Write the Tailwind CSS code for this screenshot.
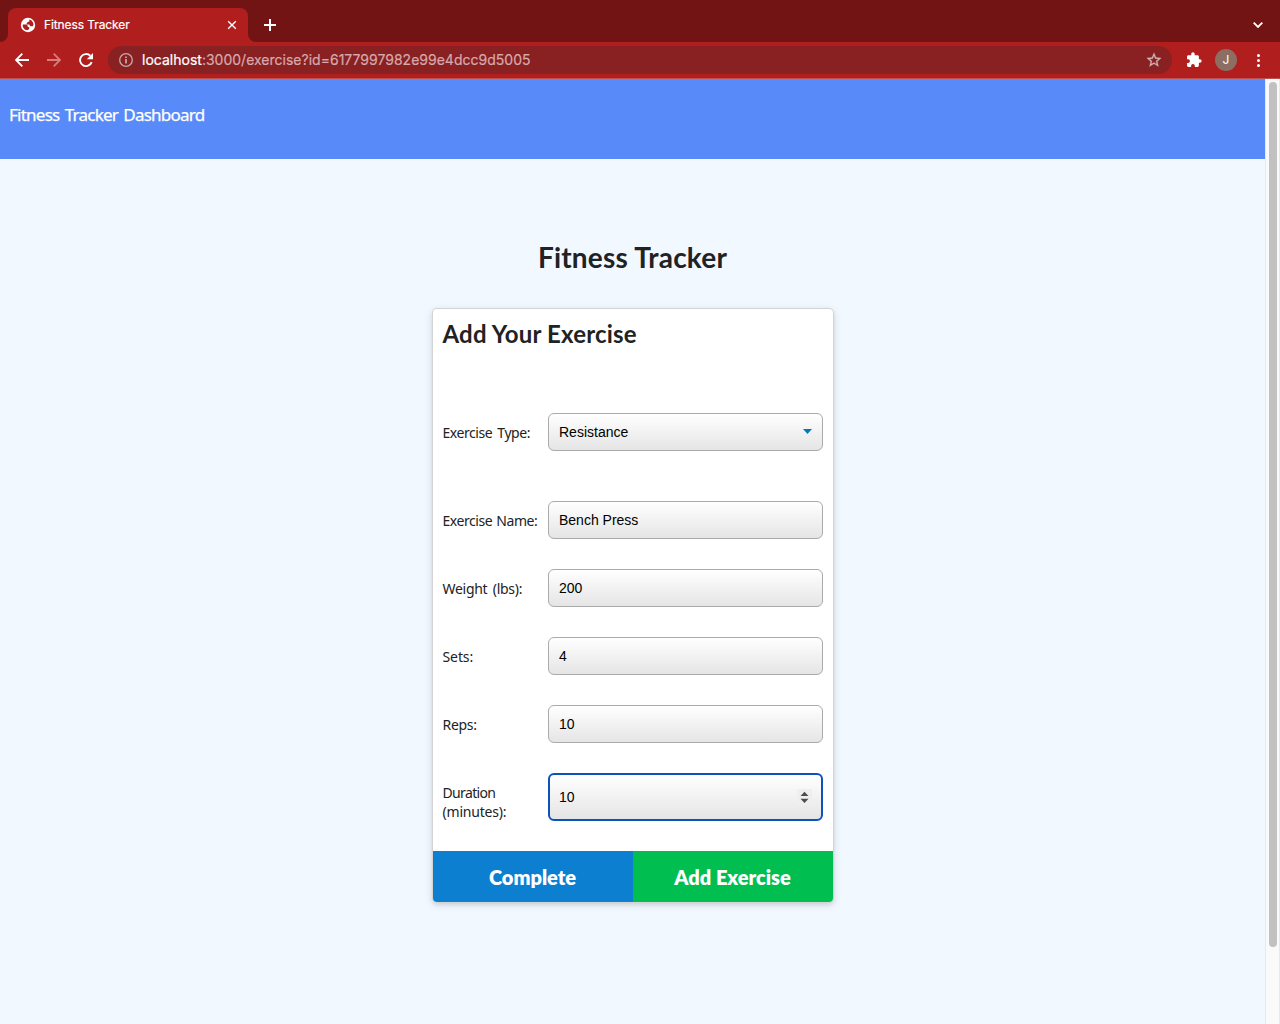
<!DOCTYPE html>
<html lang="en">
<head>
<meta charset="utf-8">
<title>Fitness Tracker</title>
<script src="https://cdn.jsdelivr.net/npm/@tailwindcss/browser@4"></script>
</head>
<body class="w-[1280px] h-[1024px] overflow-hidden flex flex-col bg-[#f1f8ff] font-['Inter',sans-serif]">
  <!-- Tab strip -->
  <div class="h-[42px] shrink-0 bg-[#721414] flex items-end">
    <svg class="w-2 h-2" viewBox="0 0 8 8"><path d="M8 0v8H0a8 8 0 0 0 8-8z" fill="#b01e1e"/></svg>
    <div class="w-60 h-[34px] rounded-t-lg bg-[#b01e1e] flex items-center pl-3 pr-[11px]">
      <svg class="w-4 h-4" viewBox="0 0 16 16"><circle cx="8" cy="8" r="7.200" fill="#fff"/><path d="M2.700 7.600H6.200Q7.700 7.700 7.700 9V10H9.200V11.700L7.800 13.300Q4.500 13.200 3.300 10.700Q2.500 9.300 2.700 7.600zM9.300 2.500Q12.700 3.200 13.500 7.200Q13.400 8.700 12.700 9.200H10.400L9.200 7.500H6.700V6.200L8 4.800H9.300z" fill="#b01e1e"/></svg>
      <span class="ml-2 flex-1 text-[12px] leading-4 text-white tracking-[-0.1px] [-webkit-text-stroke:0.2px_white] whitespace-nowrap">Fitness Tracker</span>
      <svg class="w-[10px] h-[10px]" viewBox="0 0 10 10" stroke="#fff" stroke-width="1.400"><path d="M1.200 1.200l7.600 7.600M8.800 1.200 1.200 8.800"/></svg>
    </div>
    <svg class="w-2 h-2" viewBox="0 0 8 8"><path d="M0 0v8h8a8 8 0 0 1-8-8z" fill="#b01e1e"/></svg>
    <svg class="w-3 h-3 ml-2 mb-[11px]" viewBox="0 0 12 12" stroke="#fff" stroke-width="2"><path d="M6 0v12M0 6h12"/></svg>
    <svg class="w-[10px] h-[6px] ml-auto mr-[17px] mb-[14px]" viewBox="0 0 10 6" fill="none" stroke="#fff" stroke-width="1.800"><path d="M.7.700 5 5 9.300.700"/></svg>
  </div>
  <!-- Toolbar -->
  <div class="h-[37px] shrink-0 bg-[#b01e1e] border-b border-[#c05050] flex items-center pl-[15px] pr-[14px]">
    <svg class="w-[14px] h-[14px]" viewBox="0 0 14 14" fill="none" stroke="#fff" stroke-width="1.900"><path d="M14 7H1.500M7.300.700 1 7l6.300 6.300"/></svg>
    <svg class="w-[14px] h-[14px] ml-[18px]" viewBox="0 0 14 14" fill="none" stroke="#d87c7c" stroke-width="1.800"><path d="M0 7h12.500M6.700.700 13 7l-6.300 6.300"/></svg>
    <svg class="w-[14px] h-[14px] ml-[18px]" viewBox="0 0 14 14"><path d="M12.700 9.200A6 6 0 1 1 11.300 2.800" fill="none" stroke="#fff" stroke-width="1.900"/><path d="M14 0v6.200H7.800z" fill="#fff"/></svg>
    <div class="ml-[15px] w-[1064px] h-7 rounded-full bg-[#892022] flex items-center pl-[11px] pr-[10px]">
      <svg class="w-[14px] h-[14px]" viewBox="0 0 14 14"><circle cx="7" cy="7" r="6.300" fill="none" stroke="#c5aaaa" stroke-width="1.300"/><path d="M7 6v4.400M7 3.400v1.600" stroke="#d2bcbc" stroke-width="1.500"/></svg>
      <span class="ml-[9px] flex-1 text-[14px] leading-5 text-[#d8a9aa] tracking-[0.008px] [-webkit-text-stroke:0.2px_currentColor] whitespace-nowrap"><span class="text-white">localhost</span>:3000/exercise?id=6177997982e99e4dcc9d5005</span>
      <svg class="w-4 h-4 overflow-visible" viewBox="1 1 22 22" fill="#cdb3b3" stroke="#cdb3b3" stroke-width=".4"><path d="m22 9.240-7.190-.62L12 2 9.190 8.630 2 9.240l5.460 4.730L5.820 21 12 17.270 18.180 21l-1.630-7.030L22 9.240zM12 15.400l-3.760 2.270 1-4.280-3.320-2.880 4.380-.38L12 6.100l1.710 4.040 4.380.38-3.320 2.880 1 4.280L12 15.400z"/></svg>
    </div>
    <svg class="w-4 h-4 ml-[14px]" viewBox="0.500 0.500 23 23" fill="#fff"><path d="M20.500 11H19V7c0-1.100-.9-2-2-2h-4V3.500a2.500 2.500 0 0 0-5 0V5H4c-1.100 0-1.990.9-1.990 2v3.800H3.500c1.490 0 2.700 1.210 2.700 2.700s-1.210 2.700-2.700 2.700H2V20c0 1.100.9 2 2 2h3.800v-1.500c0-1.490 1.210-2.700 2.700-2.700s2.700 1.210 2.700 2.700V22H17c1.100 0 2-.9 2-2v-4h1.500a2.500 2.500 0 0 0 0-5z"/></svg>
    <div class="ml-[13px] w-[22px] h-[22px] rounded-full bg-[#8d6e63] text-white text-[12px] leading-[22px] text-center">J</div>
    <svg class="w-[5px] h-[15px] ml-auto mr-[5px]" viewBox="0 0 5 15" fill="#fff"><circle cx="2.500" cy="2.500" r="1.500"/><circle cx="2.500" cy="7.500" r="1.500"/><circle cx="2.500" cy="12.500" r="1.500"/></svg>
  </div>
  <!-- Page -->
  <div class="flex flex-1 min-h-0">
    <main class="w-[1265px] flex flex-col items-center">
      <nav class="w-full h-20 bg-[#588bf9] pl-[9px] pt-6 text-white text-[17px] leading-6 font-['Noto_Sans',sans-serif]"><span class="tracking-[-0.750px] [word-spacing:1.500px] [-webkit-text-stroke:0.250px_white]">Fitness Tracker Dashboard</span></nav>
      <h1 class="mt-[80px] text-[28px] leading-9 font-bold tracking-[0.200px] text-[#212223] font-['Lato',sans-serif]">Fitness Tracker</h1>
      <form class="mt-[34px] ml-[1px] w-[400px] h-[593px] flex flex-col rounded-[4px] bg-white overflow-hidden shadow-[0_0_0_1px_#d4d4d5,0_2px_4px_0_rgba(34,36,38,0.12),0_2px_10px_0_rgba(34,36,38,0.15)] text-[#212223]">
        <h2 class="pl-[9.500px] pt-[9px] h-[104px] text-[24px] leading-8 font-bold tracking-[0.180px] font-['Lato',sans-serif]">Add Your Exercise</h2>
        <div class="px-[10px] flex flex-col gap-[30px] text-[14px] font-['Noto_Sans',sans-serif]">
          <div class="flex mb-5">
            <label class="w-[105.500px] -ml-[0.500px] pt-[10px] leading-[19px] tracking-[-0.450px] [word-spacing:2px] whitespace-nowrap">Exercise Type:</label>
            <div class="w-[275px] h-[38px] rounded-[6px] border border-[#aaa] bg-linear-to-b from-white to-[#e5e5e5] pl-[10px] pr-[10px] flex items-center justify-between text-black font-['Liberation_Sans',sans-serif]">Resistance<svg class="w-[9px] h-[5px] mb-px" viewBox="0 0 9 5"><path d="M0 0h9L4.500 5z" fill="#007cb2"/></svg></div>
          </div>
          <div class="flex">
            <label class="w-[105.500px] -ml-[0.500px] pt-[10px] leading-[19px] tracking-[-0.450px] [word-spacing:1px] whitespace-nowrap">Exercise Name:</label>
            <div class="w-[275px] h-[38px] rounded-[6px] border border-[#aaa] bg-linear-to-b from-white to-[#e5e5e5] pl-[10px] flex items-center text-black font-['Liberation_Sans',sans-serif]">Bench Press</div>
          </div>
          <div class="flex">
            <label class="w-[105.500px] -ml-[0.500px] pt-[10px] leading-[19px] tracking-[-0.280px] [word-spacing:2px] whitespace-nowrap">Weight (lbs):</label>
            <div class="w-[275px] h-[38px] rounded-[6px] border border-[#aaa] bg-linear-to-b from-white to-[#e5e5e5] pl-[10px] flex items-center text-black font-['Liberation_Sans',sans-serif]">200</div>
          </div>
          <div class="flex">
            <label class="w-[105.500px] -ml-[0.500px] pt-[10px] leading-[19px] tracking-[-0.100px] whitespace-nowrap">Sets:</label>
            <div class="w-[275px] h-[38px] rounded-[6px] border border-[#aaa] bg-linear-to-b from-white to-[#e5e5e5] pl-[10px] flex items-center text-black font-['Liberation_Sans',sans-serif]">4</div>
          </div>
          <div class="flex">
            <label class="w-[105.500px] -ml-[0.500px] pt-[10px] leading-[19px] tracking-[-0.300px] whitespace-nowrap">Reps:</label>
            <div class="w-[275px] h-[38px] rounded-[6px] border border-[#aaa] bg-linear-to-b from-white to-[#e5e5e5] pl-[10px] flex items-center text-black font-['Liberation_Sans',sans-serif]">10</div>
          </div>
          <div class="flex">
            <label class="w-[105.500px] -ml-[0.500px] pt-[10px] leading-[19px]"><span class="tracking-[-0.650px]">Duration</span><br><span class="tracking-[-0.200px]">(minutes):</span></label>
            <div class="w-[275px] h-[48px] rounded-[6px] border-2 border-[#0a52be] bg-linear-to-b from-white to-[#e5e5e5] pl-[9px] pr-[9px] flex items-center justify-between text-black font-['Liberation_Sans',sans-serif]">10<svg class="w-[15px] h-4" viewBox="0 0 15 16"><path d="M0 0h15v16H0z" fill="#efefef"/><path d="M7.500 2.700l4 4.300h-8zM7.500 14.100l4-4.300h-8z" fill="#4d4d4d"/></svg></div>
          </div>
        </div>
        <div class="mt-auto h-[51px] flex text-white text-[20px] leading-[52px] text-center font-extrabold font-['Lato',sans-serif]">
          <div class="w-[200px] pr-px bg-[#0c7fd0]">Complete</div>
          <div class="w-[200px] pr-px bg-[#00be4f]">Add Exercise</div>
        </div>
      </form>
    </main>
    <!-- Scrollbar -->
    <div class="w-[15px] bg-[#fafafa] border-x border-[#e8e8e8] pt-[3px] pl-[3px]"><div class="w-2 h-[865px] rounded-full bg-[#c1c1c1]"></div></div>
  </div>
</body>
</html>
